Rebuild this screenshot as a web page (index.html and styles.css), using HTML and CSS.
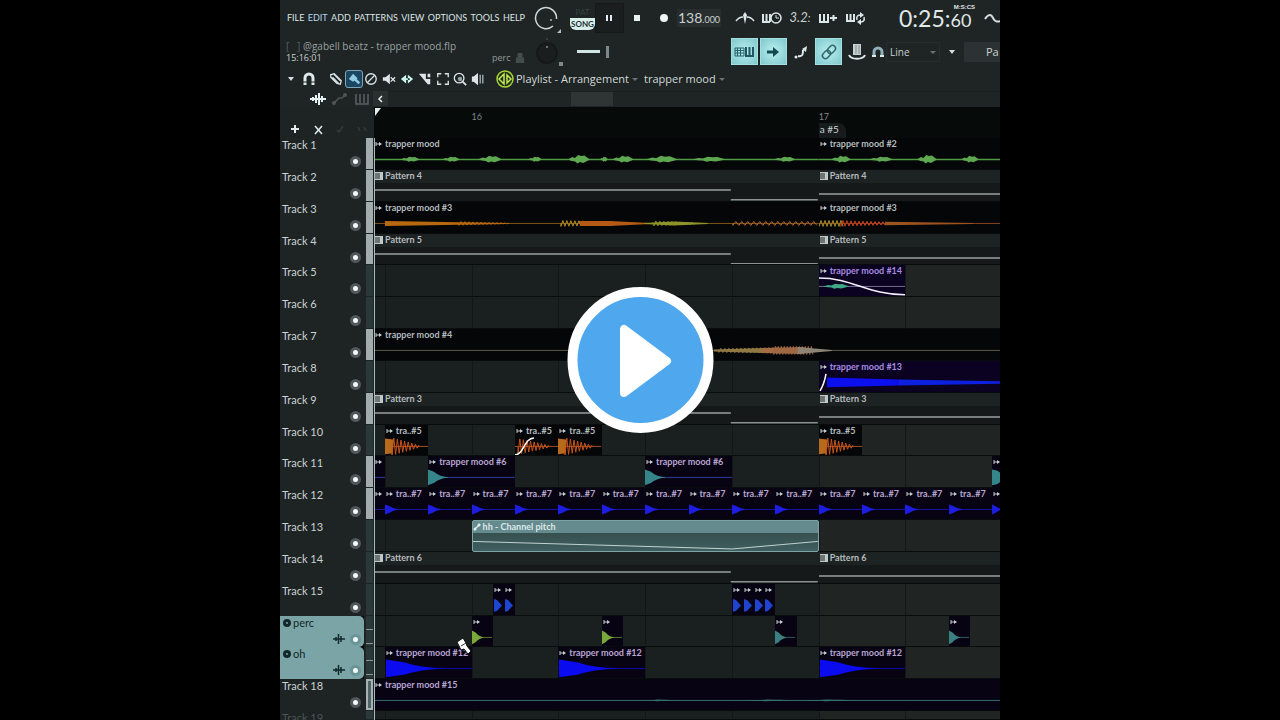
FILE: index.html
```html
<!DOCTYPE html>
<html lang="en">
<head>
<meta charset="utf-8">
<title>Playlist - Arrangement</title>
<link rel="stylesheet" href="styles.css">
</head>
<body>
<main class="stage">
  <div class="daw">
    <header class="toolbar">
      <div class="bar bar-main">
        <nav class="menu">
          <button>FILE</button><button>EDIT</button><button>ADD</button><button>PATTERNS</button><button>VIEW</button><button>OPTIONS</button><button>TOOLS</button><button>HELP</button>
        </nav>
        <svg class="knob" viewBox="0 0 36 30"><path d="M23 23A10.500 10.500 0 1 1 26.500 16" fill="none" stroke="#cfd8d8" stroke-width="1.500"/><circle cx="21" cy="17" r="1" fill="#a9b5b5"/><path d="M31 26v4h-4z" fill="#b6bfbf"/></svg>
        <div class="mode"><button class="mode-pat">PAT</button><button class="mode-song">SONG</button></div>
        <div class="transport">
          <button class="pause" aria-label="Pause"><svg viewBox="0 0 12 12"><path d="M4 3v6M8 3v6" stroke="#e5eeee" stroke-width="2"/></svg></button>
          <button aria-label="Stop"><svg viewBox="0 0 12 12"><path d="M3 3h6v6H3z" fill="#e9f1f1"/></svg></button>
          <button aria-label="Record"><svg viewBox="0 0 12 12"><circle cx="6" cy="6" r="4" fill="#f0f5f5"/></svg></button>
        </div>
        <div class="tempo"><span>138</span><small>.000</small></div>
        <div class="slots">
          <button aria-label="Metronome"><svg viewBox="0 0 22 18"><path d="M2 12Q5 8 9 8M20 12Q17 8 13 8" fill="none" stroke="#dbe6e6" stroke-width="1.500"/><path d="M9 6l2-3 2 3-2 9z" fill="#dbe6e6"/></svg></button>
          <button aria-label="Wait for input"><svg viewBox="0 0 22 18"><path d="M2 5v8h7M5.500 5v7M9 5v8" fill="none" stroke="#dbe6e6" stroke-width="2"/><circle cx="15" cy="9" r="5" fill="#1c2121" stroke="#dbe6e6" stroke-width="1.500"/><path d="M15 6v3h3" fill="none" stroke="#dbe6e6"/></svg></button>
          <button class="count" aria-label="Countdown">3.2<small>:</small></button>
          <button aria-label="Overdub"><svg viewBox="0 0 22 18"><path d="M3 5v8h8V5M7 5v8M13 9h7M16.500 6v6" fill="none" stroke="#dbe6e6" stroke-width="2"/></svg></button>
          <button aria-label="Loop record"><svg viewBox="0 0 22 18"><path d="M3 5v7h7V5M6.500 5v7" fill="none" stroke="#dbe6e6" stroke-width="2"/><path d="M13 11c-1-4 1-5 4-5M20 8c1 4-1 5-4 5" fill="none" stroke="#dbe6e6" stroke-width="1.500"/><path d="M16 3l4 3-4 3zM17 10l-4 3 4 3z" fill="#dbe6e6"/></svg></button>
        </div>
        <div class="clock"><span>0:25:</span><small>60</small><sup>M:S:CS</sup></div>
        <svg class="scope" viewBox="0 0 18 14"><path d="M2 8C5 3 8 3 10 7s4 4 8 3" fill="none" stroke="#d5dfdf" stroke-width="2"/></svg>
      </div>
      <div class="bar bar-sub">
        <div class="hint"><span class="hint-title"><i>[ &nbsp; ]</i> @gabell beatz - trapper mood.flp</span><span class="hint-pos">15:16:01</span></div>
        <div class="channel">perc <svg viewBox="0 0 12 14"><path d="M3 1h6v5h2v7H1V6h2z" fill="#434b4b"/></svg></div>
        <svg class="knob" viewBox="0 0 36 30"><circle cx="17" cy="16" r="10" fill="#1a1e1e" stroke="#151919" stroke-width="2"/><circle cx="17" cy="10" r="1" fill="#839090"/><circle cx="17" cy="2" r="1" fill="#3d4646"/><path d="M29 25h4v4h-4z" fill="#7e8888"/></svg>
        <input class="pitch" type="range" value="100" aria-label="Main pitch">
        <div class="slots slots-lit">
          <button class="lit" aria-label="Typing keyboard"><svg viewBox="0 0 22 18"><path d="M2 5h9v8H2zM2 7.500h9M2 10h9M4.500 5v8M7.500 5v8" fill="none" stroke="#25636a"/><path d="M13 4v9h7V4M16.500 4v9" fill="none" stroke="#205961" stroke-width="2"/></svg></button>
          <button class="lit" aria-label="Step"><svg viewBox="0 0 22 18"><path d="M5 9h8" stroke="#124a52" stroke-width="3"/><path d="M11 4l6 5-6 5z" fill="#124a52"/></svg></button>
          <button aria-label="Slide"><svg viewBox="0 0 22 18"><path d="M8 13c5 1 5-2 5-6" fill="none" stroke="#e0eaea" stroke-width="2"/><circle cx="6" cy="14" r="1.500" fill="#e0eaea"/><path d="M12 6l5-3-1 6z" fill="#e0eaea"/></svg></button>
          <button class="lit" aria-label="Link"><svg viewBox="0 0 22 18"><g fill="none" stroke="#33686d" stroke-width="1.500" transform="rotate(-45 11 9)"><rect x="3" y="6" width="9" height="6" rx="3"/><rect x="10" y="6" width="9" height="6" rx="3"/></g></svg></button>
          <button aria-label="Plugin"><svg viewBox="0 0 22 18"><path d="M7 1h8v11H7z" fill="#c7d1d1"/><path d="M10 2v9M13 2v9" stroke="#7e8989"/><path d="M3 12c2 5 14 5 16 0" fill="none" stroke="#e0eaea" stroke-width="2"/></svg></button>
        </div>
        <svg class="snap-icon" viewBox="0 0 16 16"><path d="M4 13V8a4 4 0 0 1 8 0v5" fill="none" stroke="#8fb0b8" stroke-width="3"/><path d="M2 12h4M10 12h4" stroke="#dde6e6" stroke-width="2"/></svg>
        <div class="snap-box"><select class="snap" aria-label="Snap"><option>Line</option></select></div>
        <button class="caret" aria-label="Pattern menu"><i></i></button>
        <div class="pattern-name">Pa</div>
      </div>
      <div class="bar bar-tools">
        <button class="caret" aria-label="Playlist menu"><i></i></button>
        <button class="magnet" aria-label="Snap"><svg viewBox="0 0 16 16"><path d="M4 14V7a4 4 0 0 1 8 0v7" fill="none" stroke="#dfe9e9" stroke-width="3"/><path d="M2 11h4M10 11h4" stroke="#1f2423"/></svg></button>
        <div class="tools">
          <button aria-label="Draw"><svg viewBox="0 0 16 16"><path d="M2 3l4-1 8 8-1 4-4-1-7-7zM4 6l7 7M6 3l7 7" fill="none" stroke="#d8e2e2" stroke-width="1.500"/></svg></button>
          <button class="on" aria-label="Paint"><svg viewBox="0 0 16 16"><path d="M2 8l5-6 5 5-5 4z" fill="#8fc9e4"/><path d="M9 8l5 5" stroke="#8fc9e4" stroke-width="3"/></svg></button>
          <button aria-label="Delete"><svg viewBox="0 0 16 16"><circle cx="8" cy="8" r="6" fill="none" stroke="#dce6e6" stroke-width="1.500"/><path d="M12 4l-8 8" stroke="#dce6e6" stroke-width="1.500"/></svg></button>
          <button aria-label="Mute"><svg viewBox="0 0 16 16"><path d="M1 6h3l5-4v12l-5-4H1z" fill="#dce6e6"/><path d="M10 6l5 5M15 6l-5 5" stroke="#dce6e6" stroke-width="1.500"/></svg></button>
          <button aria-label="Slip"><svg viewBox="0 0 16 16"><path d="M1 8l6-5v10zM15 8L9 3v10zM5 7h6v2H5z" fill="#c9f5ec"/></svg></button>
          <button aria-label="Slice"><svg viewBox="0 0 16 16"><path d="M1 2h8v6h5v6h-3zM11 2h3v4h-3z" fill="#dce6e6"/></svg></button>
          <button aria-label="Select"><svg viewBox="0 0 16 16"><path d="M2 6V2h4M10 2h4v4M14 10v4h-4M6 14H2v-4" fill="none" stroke="#dce6e6" stroke-width="1.500"/></svg></button>
          <button aria-label="Zoom"><svg viewBox="0 0 16 16"><circle cx="7" cy="7" r="5.500" fill="none" stroke="#dce6e6" stroke-width="1.500"/><circle cx="8" cy="8" r="2.500" fill="#8fa3a3"/><path d="M11 11l4 4" stroke="#dce6e6" stroke-width="2"/></svg></button>
          <button aria-label="Playback"><svg viewBox="0 0 16 16"><path d="M1 5h2l5-4v14l-5-4H1z" fill="#dce6e6"/><path d="M10.500 3v10M13.500 3v10" stroke="#a9b5b5" stroke-width="1.500"/></svg></button>
        </div>
        <svg class="playlist-icon" viewBox="0 0 20 20"><circle cx="10" cy="10" r="8" fill="#20310f" stroke="#a9d23c" stroke-width="1.500"/><path d="M9 5v10l-5-5zM12 6l4 4-4 4z" fill="none" stroke="#c3e85c" stroke-width="1.500"/></svg>
        <button class="title">Playlist - Arrangement<i></i></button>
        <button class="title">trapper mood<i></i></button>
      </div>
      <div class="bar bar-scroll">
        <div class="modes">
          <svg viewBox="0 0 20 14"><path d="M2 7h16M5 5v4M8 3v8M11 1v12M14 4v6" stroke="#e8f1f1" stroke-width="2"/></svg>
          <svg viewBox="0 0 20 14"><path d="M4 11l5-5h3l4-4" fill="none" stroke="#4d5555" stroke-width="1.500"/><circle cx="4" cy="11" r="2" fill="#4d5555"/><circle cx="15" cy="3" r="2" fill="#4d5555"/></svg>
          <svg viewBox="0 0 20 14"><path d="M4 2v10h12V2M8 2v9M12 2v9" fill="none" stroke="#5a6363" stroke-width="1.500"/></svg>
        </div>
        <button class="scroll-left" aria-label="Scroll left"><svg viewBox="0 0 10 10"><path d="M6 2L3 5l3 3" fill="none" stroke="#e4ecec" stroke-width="1.500"/></svg></button>
        <div class="scroll-track"><div class="scroll-thumb"></div></div>
      </div>
    </header>
    <div class="ruler">
      <div class="ruler-tools"><svg viewBox="0 0 94 18"><path d="M11 9h8M15 5v8" stroke="#e2ebeb" stroke-width="2"/><path d="M35 6l7 8M42 6l-7 8" stroke="#e2ebeb" stroke-width="1.500"/><path d="M57 10l2 2 4-6M78 7l2 4M84 7l2 4" fill="none" stroke="#343b3b" stroke-width="1.500"/></svg></div>
      <div class="ruler-scale">
        <div class="units">
          <svg class="playhead" viewBox="0 0 8 10"><path d="M1 1h6L1 9z" fill="#e4eeee"/></svg>
          <span class="bar-no bar-16">16</span><span class="bar-no bar-17">17</span><span class="marker">a #5</span>
        </div>
      </div>
    </div>
    <section class="tracks" id="tracks"></section>
    <svg class="brush" viewBox="0 0 16 18"><path d="M1 5l6-4 3 5 1 3 4 5-3 3-4-5-3 1z" fill="#fff" stroke="#111"/><path d="M5 9l5-3" stroke="#333"/></svg>
  </div>
  <button class="play" aria-label="Play video"><svg viewBox="0 0 148 148"><circle cx="74.500" cy="74" r="68" fill="#4fa8ee" stroke="#fff" stroke-width="10"/><path d="M58 43v64l43-32z" fill="#fff" stroke="#fff" stroke-width="8" stroke-linejoin="round"/></svg></button>
</main>
<script src="playlist.js"></script>
</body>
</html>
```
FILE: styles.css
```css
*, *::before, *::after { box-sizing: border-box; }
body {
  margin: 0;
  background: #000;
  color: #c9d2d2;
  font: 10px/12px Lato, "Open Sans", sans-serif;
}
button, select { font: inherit; color: inherit; background: none; border: 0; padding: 0; margin: 0; }
i { font-style: normal; }
svg { display: block; }
.stage { position: relative; display: flex; justify-content: center; height: 100vh; overflow: hidden; }
.daw {
  position: relative;
  flex: 0 1 56.25%;
  display: flex;
  flex-direction: column;
  min-width: 0;
  overflow: hidden;
  background: #1e2423;
}

/* toolbar */
.toolbar { flex: none; background: #1f2424; }
.bar { display: flex; align-items: center; overflow: hidden; white-space: nowrap; }
.bar > * { flex: none; }
.bar-main { height: 35px; }
.bar-sub { height: 33px; }
.bar-tools { height: 22px; }
.bar-scroll { height: 17px; }
.menu { display: flex; justify-content: space-between; width: 250px; padding: 0 5px 0 7px; font-size: 9px; line-height: 16px; color: #dbe4e4; }
.menu button:nth-child(2) { color: #b3d5ee; }
.knob { width: 36px; height: 30px; }
.mode { display: flex; flex-direction: column; width: 29px; padding-left: 4px; font-size: 9px; line-height: 12px; }
.mode button { width: 25px; text-align: center; }
.mode-pat { color: #394141; font-size: 8px; }
.mode-song { background: #d9efec; color: #243030; border-radius: 0 0 6px 6px; font-size: 8px; font-weight: 700; }
.transport { display: flex; width: 82px; align-items: center; }
.transport button { flex: 1; height: 30px; display: grid; place-items: center; }
.transport svg { width: 12px; height: 12px; }
.transport .pause { background: #1a1e1e; border: 1px solid #151919; }
.tempo { width: 44px; height: 18px; margin-right: 10px; text-align: center; background: #282d2d; font-size: 14px; line-height: 18px; }
.tempo small { font-size: 9px; }
.slots { display: flex; width: 138px; }
.slots button { flex: 1; height: 27px; display: grid; place-items: center; }
.slots svg { width: 22px; height: 18px; }
.slots-lit { gap: 2px; }
.slots .lit { background: radial-gradient(#b9eff0, #7fc8cd); border: 1px solid #a4dfe2; }
.slots .count { display: block; font-size: 13px; font-style: italic; }
.count small { font-size: 11px; }
.clock { display: flex; position: relative; align-items: baseline; margin-left: 30px; width: 84px; font-size: 23px; line-height: 32px; color: #e0e8e8; }
.clock small { font-size: 18px; line-height: 18px; }
.clock sup { position: absolute; right: 8px; top: 2px; font: bold 6px/7px "Liberation Sans", sans-serif; }
.scope { width: 18px; height: 14px; }

.hint { display: flex; flex-direction: column; width: 206px; padding-left: 6px; font: 10px/12px "Open Sans", sans-serif; }
.hint-title { color: #98a1a1; }
.hint-title i { color: #59615f; }
.hint-pos { font-size: 9px; }
.channel { display: flex; align-items: center; gap: 4px; width: 44px; padding: 12px 0 0 6px; color: #929b9b; font: 9px/12px "Open Sans", sans-serif; }
.channel svg { width: 10px; height: 14px; }
.pitch { appearance: none; width: 32px; height: 14px; margin: 0 122px 0 11px; background: linear-gradient(#d1e5e5, #d1e5e5) 0 50% / 23px 3px no-repeat; }
.pitch::-webkit-slider-thumb { appearance: none; width: 3px; height: 12px; background: #7d8888; }
.snap-icon { width: 16px; height: 16px; margin-left: 1px; }
.snap-box { position: relative; width: 54px; }
.snap-box::after { content: ""; position: absolute; right: 4px; top: 9px; border: 3px solid transparent; border-top-color: #687272; border-bottom: 0; pointer-events: none; }
.snap { width: 100%; height: 20px; padding-left: 3px; appearance: none; border: 1px solid #272d2d; font: 10px/14px "Open Sans", sans-serif; }
.caret { display: grid; place-items: center; width: 22px; height: 18px; }
.caret i, .title i { border: 3px solid transparent; border-top: 4px solid #d4dede; border-bottom: 0; }
.bar-sub .caret { width: 24px; }
.pattern-name { flex: 1; height: 20px; padding-left: 22px; background: #2c3233; font: 11px/20px "Open Sans", sans-serif; }
.magnet { width: 16px; margin: 0 8px 0 -1px; }
.magnet svg { width: 16px; height: 16px; }
.tools { display: flex; width: 160px; margin-left: 2px; }
.tools button { flex: 1; display: grid; place-items: center; height: 18px; border: 1px solid transparent; }
.tools svg { width: 14px; height: 14px; }
.tools .on { background: #1b4661; border-color: #7fa4b8; border-radius: 3px; }
.playlist-icon { width: 20px; height: 20px; margin-left: 8px; }
.title { display: flex; align-items: center; gap: 3px; margin: 0 5px 0 1px; font: 11px/18px "Open Sans", sans-serif; color: #d0d9d9; }
.title i { border-top: 3px solid #6a7373; }
.modes { display: flex; width: 93px; padding-left: 28px; gap: 2px; }
.modes svg { width: 20px; height: 14px; }
.scroll-left { width: 15px; height: 15px; display: grid; place-items: center; background: #2a2f30; }
.scroll-left svg { width: 10px; height: 10px; }
.scroll-track { flex: 1; height: 15px; padding-left: 25%; border-top: 1px solid #1a1f1f; }
.scroll-thumb { width: 42px; height: 14px; margin-left: 3px; background: #2f3435; }

/* ruler and lanes share one time grid */
.ruler { flex: none; display: flex; height: 31px; }
.ruler-tools { width: 94px; padding-top: 13px; }
.ruler-tools svg { width: 94px; height: 18px; }
.ruler-scale, .lane { flex: 1; min-width: 0; overflow: hidden; }
.ruler-scale { background: #060a09; }
.units { display: grid; grid-template-columns: repeat(58, minmax(0, 1fr)); grid-template-rows: minmax(0, 1fr); height: 100%; margin: 0 -3px 0 -1px; }
.ruler .units { grid-template-rows: 16px 15px; margin-left: 0; }
.playhead { grid-area: 1 / 1; width: 8px; height: 10px; }
.bar-no { grid-row: 1; color: #7e8888; padding-top: 4px; font-size: 9px; }
.bar-16 { grid-column: 10 / span 4; }
.bar-17 { grid-column: 42 / span 4; }
.marker { grid-area: 2 / 42 / 3 / span 3; justify-self: start; padding: 0 7px 0 1px; background: #171b1b; border-radius: 0 8px 0 0; white-space: nowrap; }

.tracks { flex: 1; min-height: 0; display: grid; grid-template-rows: repeat(18, minmax(0, 1fr)) 9px; background: #050808; }
.track { display: flex; min-height: 0; overflow: hidden; }
.head { flex: none; display: grid; grid-template: 14px 1fr / 1fr 18px; width: 84px; padding-left: 2px; background: #1e2423; }
.name { grid-column: 1 / 3; font-size: 11px; line-height: 14px; white-space: nowrap; }
.wave-mark { grid-area: 2 / 1; justify-self: end; width: 14px; height: 14px; margin: 2px 0 0; }
.mute { appearance: none; grid-area: 2 / 2; width: 11px; height: 11px; margin: 4px 0 0 4px; border-radius: 50%; border: 3px solid #4f5858; background: #f3f8f8; }
.linked .head { background: #7ba4a7; color: #12282a; border-radius: 0 5px 5px 0; }
.linked .name { display: flex; align-items: center; gap: 2px; }
.linked .name::before { content: ""; width: 8px; height: 8px; margin-left: 1px; border: 3px solid #12282a; border-radius: 50%; background: #7ba4a7; }
.linked .mute { border-color: #699598; }
.meter { flex: none; width: 10px; padding: 0 1px 1px 2px; background: #1e2423; }
.meter::before { content: ""; display: block; height: 100%; background: #2b3838; }
.meter.bright::before { background: #a2acae; }
.meter.outlined::before { background: #506366; border: 2px solid #a6b2b3; }
.linked .meter::before { background: repeating-linear-gradient(#2b3838 0 13px, #8b9898 13px 14px); }
.track:last-child .name { color: #4b5353; }
.lane { border-left: 1px solid #a7bdb9; }
.cell { grid-row: 1; background: #1a1f1f; border-left: 1px solid #121616; border-bottom: 1px solid #090c0c; }
.cell.late { background: #202524; }
.clip { grid-row: 1; display: flex; flex-direction: column; min-width: 0; overflow: hidden; background: #050607; border-bottom: 1px solid #080b0b; }
.clip svg.wave { flex: 1; width: 100%; min-height: 0; }
.label { flex: none; display: flex; align-items: center; height: 12px; gap: 2px; padding-left: 1px; white-space: nowrap; color: #b4bbbe; font-size: 9px; font-weight: 700; }
.label svg { flex: none; width: 8px; height: 8px; }
.clip.pattern { background: linear-gradient(#1d2222 42%, #151919 42%); }
.clip.violet { background: #080312; }
.clip.violet .label { color: #b8a6d2; }
.clip.deep { background: #0a0220; }
.clip.deep .label { color: #a78be0; }
.clip.auto { background: linear-gradient(#668b8e 40%, #36504f 40%, #3f5e60); border: 1px solid #7fa3a5; border-radius: 2px; }
.clip.auto .label { color: #dce8e8; padding-left: 0; }

.brush { position: absolute; left: 24.500%; top: 88.500%; width: 16px; height: 18px; }
.play { position: absolute; left: 50%; top: 50%; width: 148px; height: 148px; margin: -74px; border-radius: 50%; }
.play svg { width: 148px; height: 148px; }
```
FILE: playlist.js
```js
// One unit is a 32nd note; wave shapes use 10.85 px per unit, 19 px high.
const U = 10.85;
const MID = 9.5;
const line = (x1, x2, y, c, w = 1) => `<path d="M${x1} ${y}H${x2}" stroke="${c}" stroke-width="${w}"/>`;
const blob = (x, w, h, c) => `<path d="M${x} ${MID}l${w * .2} ${-h * .5}l${w * .12} ${h * .2}l${w * .15} ${-h * .6}l${w * .13} ${h * .2}l${w * .15} ${-h * .1}L${x + w} ${MID}L${x + w * .7} ${MID + h * .7}l${-w * .15} ${-h * .2}l${-w * .12} ${h * .3}l${-w * .1} ${-h * .4}l${-w * .15} ${-h * .1}z" fill="${c}"/>`;
const ripple = (x, w, h1, h2, c, step = 2) => {
  let d = `M${x} ${MID}`, up = 1;
  for (let i = 0; i <= w; i += step, up = -up) d += `L${x + i} ${MID + up * (h1 + (h2 - h1) * i / w)}`;
  return `<path d="${d}" fill="none" stroke="${c}"/>`;
};
const taper = (x, w, h1, h2, c) => `<path d="M${x} ${MID - h1}L${x + w} ${MID - h2}V${MID + h2}L${x} ${MID + h1}z" fill="${c}"/>`;
const hit = (w, x, h, body, c) => line(0, w, MID, c, .7) +
  `<path d="M${x} ${MID - h}L${x + body * .3} ${MID - h * .7}Q${x + body * .55} ${MID - 1} ${x + body} ${MID}Q${x + body * .55} ${MID + 1} ${x + body * .3} ${MID + h * .7}L${x} ${MID + h}z" fill="${c}"/>`;

const G = '#4f9a45', G2 = '#5fa852';
const green1 = line(0, 445, MID, G, 1.5) + [[26, 20, 3], [68, 18, 3], [104, 24, 4], [154, 14, 3], [194, 22, 5], [226, 8, 3], [238, 22, 4], [272, 32, 4], [318, 34, 3], [400, 22, 3]].map(b => blob(...b, G2)).join('');
const green2 = line(0, 184, MID, G, 1.5) + [[12, 20, 4], [50, 24, 3], [98, 20, 5], [142, 18, 4]].map(b => blob(...b, G2)).join('');
const orange1 = line(0, 445, MID, '#7d5a1c') + taper(11, 120, 2.5, .5, '#b8680f') + ripple(85, 50, 2, .3, '#b8680f') + ripple(187, 26, 3, 2.5, '#b58a22') + taper(206, 32, 2.5, 2.5, '#b55a14') + taper(236, 40, 2.5, .5, '#b55a14') + taper(270, 30, .5, 2, '#8f942a') + taper(300, 34, 2, .5, '#8f942a') + ripple(280, 40, 2.5, 1, '#8f942a') + ripple(359, 86, 2, 2, '#b8652a', 3);
const orange2 = line(0, 184, MID, '#8c4420') + ripple(0, 24, 3, 3, '#a5902e') + ripple(22, 46, 3, 1.5, '#c4401c') + taper(66, 88, 1.8, .5, '#9c5320');
const faint7 = line(0, 629, MID, '#5e5a4c') + taper(340, 50, 1, 2.5, '#8f7844') + ripple(345, 60, 2, 3, '#8f7844') + taper(388, 42, 2.5, 3.5, '#a56c44') + ripple(400, 40, 4, 4, '#9c6542', 1.5) + taper(424, 34, 3.5, .5, '#8d8476');
const patA = line(0, 357, 8, '#98a1a0', 1.5) + line(357, 444, 18, '#8a9292', 1.5);
const patB = line(0, 184, 12, '#98a1a0', 1.5);
const w5 = line(0, 43, MID, '#a8501c') + taper(0, 8, 8, 7, '#b56a1c') + ripple(7, 28, 9, 1, '#c9541c', 1.8);
const w5fade = line(0, 43, MID, '#a8501c') + ripple(3, 32, 8, 1, '#c9541c', 1.8) + '<path d="M0 18C9 18 9 1 19 1" fill="none" stroke="#fff" stroke-width="1.500"/>';
const w6 = line(0, 87, MID, '#2f3ba0') + hit(20, 0, 8, 20, '#35858a');
const w7 = hit(43, 0, 5, 14, '#1d1de0');
const w12 = hit(87, 1, 9, 60, '#0b0bf0');
const snare = '<path d="M1 3l3 1 5 5.500-5 5.500-3 1z" fill="#1f45d0"/>';
const perc = c => hit(20, 0, 7, 12, c);
const w14 = line(0, 86, MID, '#777094') + blob(4, 26, 3, '#3fa884') + '<path d="M0 1C34 1 48 18 87 18" fill="none" stroke="#f4f1ff" stroke-width="1.500"/>';
const w13 = taper(8, 72, 5, 3, '#0d10ee') + taper(80, 104, 3, 1.2, '#0d20e0') + '<path d="M1 18Q5 12 7 1" fill="none" stroke="#fff" stroke-width="1.500"/>';
const w15 = line(0, 629, MID, '#34716f') + blob(270, 30, 1, '#34716f') + blob(370, 50, 1, '#34716f') + blob(430, 50, 1, '#34716f');
const auto = '<path d="M0 9L261 17L347 9" fill="none" stroke="#c5d7d5"/>';

const pats = n => [[0, 41, `Pattern ${n}`, patA, 'pattern'], [41, 17, `Pattern ${n}`, patB, 'pattern']];
const every = (starts, len, text, wave, kind) => starts.map(s => [s, len, text, wave, kind]);
const T = 'trapper mood';
const rows = [
  ['Track 1', 'bright', [[0, 41, T, green1], [41, 17, T + ' #2', green2]]],
  ['Track 2', 'bright', pats(4)],
  ['Track 3', 'bright', [[0, 41, T + ' #3', orange1], [41, 17, T + ' #3', orange2]]],
  ['Track 4', 'bright', pats(5)],
  ['Track 5', '', [[41, 8, T + ' #14', w14, 'deep']]],
  ['Track 6', '', []],
  ['Track 7', 'bright', [[0, 58, T + ' #4', faint7]]],
  ['Track 8', '', [[41, 17, T + ' #13', w13, 'deep']]],
  ['Track 9', 'bright', pats(3)],
  ['Track 10', '', [[1, 4, 'tra..#5', w5], [13, 4, 'tra..#5', w5fade], [17, 4, 'tra..#5', w5], [41, 4, 'tra..#5', w5]]],
  ['Track 11', 'bright', [[0, 1, '', line(0, 11, MID, '#2f3ba0'), 'violet'], ...every([5, 25], 8, T + ' #6', w6, 'violet'), [57, 1, '', taper(0, 5, 8, 7, '#35858a') + taper(5, 6, 7, 3, '#35858a'), 'violet']]],
  ['Track 12', 'bright', [[0, 1, '', line(0, 11, MID, '#1d1da0'), 'violet'], ...every([1, 5, 9, 13, 17, 21, 25, 29, 33, 37, 41, 45, 49, 53], 4, 'tra..#7', w7, 'violet'), [57, 1, '', hit(11, 0, 5, 11, '#1d1de0'), 'violet']]],
  ['Track 13', '', [[9, 32, 'hh - Channel pitch', auto, 'auto']]],
  ['Track 14', '', pats(6)],
  ['Track 15', '', every([11, 12, 33, 34, 35, 36], 1, '', snare, 'violet')],
  ['perc', 'linked', [...every([9, 21], 2, '', perc('#7ba83a'), 'violet'), ...every([37, 53], 2, '', perc('#3c7f80'), 'violet')]],
  ['oh', 'linked', every([1, 17, 41], 8, T + ' #12', w12, 'violet')],
  ['Track 18', 'outlined', [[0, 58, T + ' #15', w15, 'violet']]],
  ['Track 19', '', []],
];

const icons = {
  audio: '<path d="M1 2v4M1 4h5" stroke="#c4cccf" fill="none"/><path d="M4 2l3 2-3 2z" fill="#c4cccf"/>',
  pattern: '<path d="M0 0h8v8H0z" fill="#c0c7c7"/><path d="M0 2h5M0 4h5M0 6h5" stroke="#1d2222"/>',
  auto: '<path d="M1 7l6-6" stroke="#e0ecec" stroke-width="1.500"/><circle cx="2" cy="6" r="1.500" fill="#e0ecec"/><circle cx="6" cy="2" r="1.500" fill="#e0ecec"/>',
};
const cells = [[0, 1], [1, 8], [9, 8], [17, 8], [25, 8], [33, 8], [41, 8], [49, 9]]
  .map(([s, n]) => `<div class="cell${s > 40 ? ' late' : ''}" style="grid-column:${s + 1}/span ${n}"></div>`).join('');

document.getElementById('tracks').innerHTML = rows.map(([name, state, clips]) => {
  const linked = state === 'linked';
  const body = clips.map(([s, n, text, wave, kind = 'audio']) =>
    `<div class="clip ${kind}" style="grid-column:${s + 1}/span ${n}"><span class="label"><svg viewBox="0 0 8 8">${icons[kind] || icons.audio}</svg>${text}</span><svg class="wave" viewBox="0 0 ${n * U} 19" preserveAspectRatio="none">${wave}</svg></div>`).join('');
  const mark = linked ? '<svg class="wave-mark" viewBox="0 0 14 14"><path d="M1 7h12M4 5v4M6.500 2v10M9 4v6" stroke="#12282a" stroke-width="1.500"/></svg>' : '';
  return `<div class="track ${linked ? 'linked' : ''}"><div class="head"><span class="name">${name}</span>${mark}<input class="mute" type="checkbox" checked aria-label="${name} enabled"></div><div class="meter ${state}"></div><div class="lane"><div class="units">${cells}${body}</div></div></div>`;
}).join('');
```
